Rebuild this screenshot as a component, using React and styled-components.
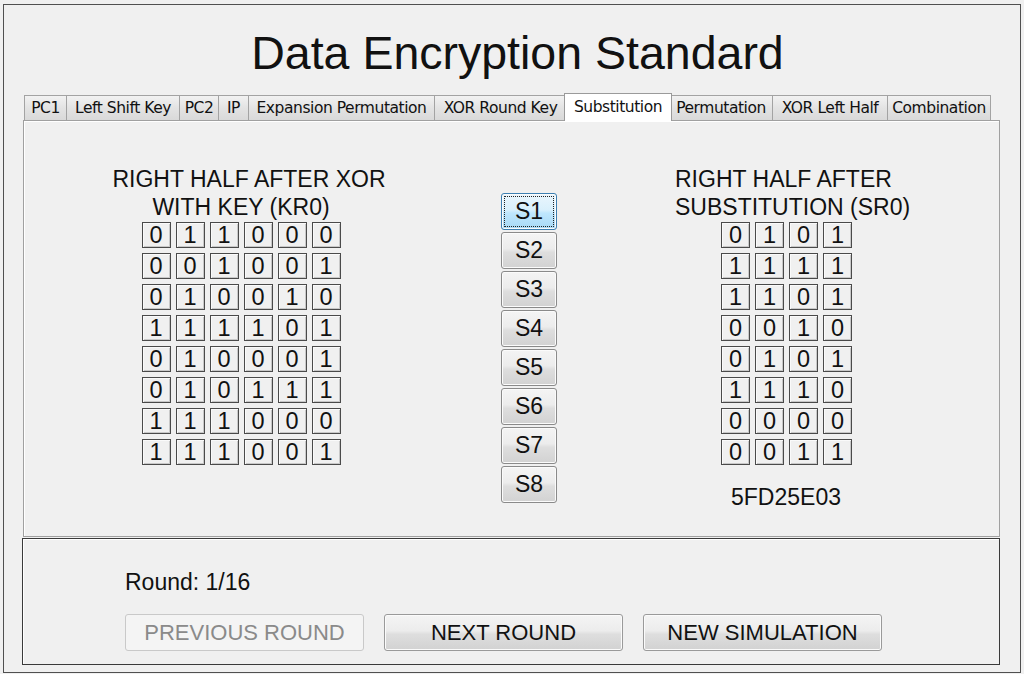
import React from "react";
import styled, { createGlobalStyle, css } from "styled-components";

const Global = createGlobalStyle`
  html, body { margin: 0; padding: 0; background: #f0f0f0; }
  body { font-family: "Liberation Sans", Arial, sans-serif; color: #111; }
`;

const Frame = styled.div`
  margin: 4px 3px 0 3px;
  height: 669px;
  box-sizing: border-box;
  border: 1px solid #505050;
  background: #f0f0f0;
  display: flex;
  flex-direction: column;
`;

const Title = styled.h1`
  margin: 0;
  padding: 25px 0 0 11px;
  height: 63px;
  font-family: "Liberation Sans", Arial, sans-serif;
  font-weight: normal;
  font-size: 46.5px;
  line-height: 46px;
  text-align: center;
  color: #111;
`;

const TabArea = styled.div`
  margin: 0 20px 0 19px;
  display: flex;
  flex-direction: column;
`;

const TabStrip = styled.div`
  display: flex;
  align-items: flex-end;
  height: 27px;
  padding-left: 2px;
  position: relative;
  z-index: 1;
`;

const Tab = styled.div`
  box-sizing: border-box;
  width: ${(p) => p.$w}px;
  height: 25px;
  border: 1px solid #a3a3a3;
  border-bottom: none;
  margin-left: -1px;
  background: linear-gradient(#f2f2f2, #e3e3e3 50%, #d9d9d9);
  font-family: "DejaVu Sans", Tahoma, sans-serif;
  font-size: 15.5px;
  line-height: 25px;
  text-align: center;
  white-space: nowrap;
  overflow: hidden;
  color: #111;
  letter-spacing: -0.45px;
  ${(p) =>
    p.$active &&
    css`
      height: 28px;
      background: #ffffff;
      margin-left: -3px;
      margin-right: -2px;
      width: ${p.$w + 4}px;
      line-height: 26px;
      position: relative;
      top: 1px;
      border-color: #9a9a9a;
    `}
`;

const TabPanel = styled.div`
  box-sizing: border-box;
  height: 417px;
  border: 1px solid #a0a0a0;
  box-shadow: inset 1px 1px 0 #ffffff;
  background: #f0f0f0;
  display: flex;
  align-items: flex-start;
`;

const LeftCol = styled.div`
  margin-left: 76px;
  margin-top: 44px;
  width: 282px;
  display: flex;
  flex-direction: column;
  align-items: center;
`;

const Heading = styled.div`
  font-size: 23px;
  line-height: 28px;
  white-space: nowrap;
  color: #111;
  text-align: ${(p) => p.$align || "center"};
  padding-left: ${(p) => p.$shift || 0}px;
`;

const Grid = styled.div`
  display: grid;
  grid-template-columns: repeat(${(p) => p.$cols}, 29px);
  grid-auto-rows: 26px;
  column-gap: 5px;
  row-gap: 5px;
  margin-top: 1px;
  margin-left: ${(p) => p.$ml || 0}px;
`;

const Cell = styled.div`
  box-sizing: border-box;
  border: 1px solid #4a4a4a;
  box-shadow: inset 1px 1px 0 #fafafa, inset -1px -1px 0 #c8c8c8;
  background: #f0f0f0;
  font-size: 23.5px;
  line-height: 24px;
  text-align: center;
  color: #111;
`;

const CenterCol = styled.div`
  margin-left: 119px;
  margin-top: 72px;
  display: flex;
  flex-direction: column;
  gap: 2px;
`;

const buttonBase = css`
  box-sizing: border-box;
  border: 1px solid #8a8a8a;
  border-radius: 3px;
  background: linear-gradient(#f4f4f4 0%, #ececec 45%, #dedede 55%, #d2d2d2 100%);
  box-shadow: inset 0 0 0 1px #fbfbfb;
  font-family: "Liberation Sans", Arial, sans-serif;
  color: #111;
  padding: 0;
  cursor: default;
`;

const SButton = styled.button`
  ${buttonBase}
  width: 56px;
  height: 37px;
  font-size: 23px;
  position: relative;
  ${(p) =>
    p.$focused &&
    css`
      border-color: #3c7fb1;
      background: linear-gradient(#eaf6fd 0%, #d9f0fc 45%, #bee6fd 55%, #a7d9f5 100%);
      &::after {
        content: "";
        position: absolute;
        inset: 2px;
        border: 1px dotted #222;
        border-radius: 1px;
      }
    `}
`;

const RightCol = styled.div`
  margin-left: 118px;
  margin-top: 44px;
  display: flex;
  flex-direction: column;
  align-items: flex-start;
`;

const Hex = styled.div`
  font-size: 23px;
  line-height: 28px;
  margin-top: 18px;
  width: 130px;
  margin-left: 46px;
  text-align: center;
  color: #111;
`;

const BottomPanel = styled.div`
  box-sizing: border-box;
  margin: 1px 20px 0 18px;
  height: 127px;
  border: 1px solid #3a3a3a;
  box-shadow: inset 1px 1px 0 #ffffff;
  padding: 29px 0 0 102px;
  display: flex;
  flex-direction: column;
`;

const RoundLabel = styled.div`
  font-size: 23px;
  line-height: 28px;
  color: #111;
`;

const ButtonRow = styled.div`
  display: flex;
  gap: 20px;
  margin-top: 18px;
`;

const BigButton = styled.button`
  ${buttonBase}
  width: 239px;
  height: 37px;
  font-size: 22px;
  border-color: #9a9a9a;
  &:disabled {
    background: #f4f4f4;
    border-color: #c9c9c9;
    box-shadow: none;
    color: #8a8a8a;
  }
`;

const tabs = [
  ["PC1", 43],
  ["Left Shift Key", 114],
  ["PC2", 40],
  ["IP", 31],
  ["Expansion Permutation", 187],
  ["XOR Round Key", 133],
  ["Substitution", 104],
  ["Permutation", 104],
  ["XOR Left Half", 116],
  ["Combination", 104],
];

const kr0 = [
  "011000",
  "001001",
  "010010",
  "111101",
  "010001",
  "010111",
  "111000",
  "111001",
];

const sr0 = ["0101", "1111", "1101", "0010", "0101", "1110", "0000", "0011"];

export default function App() {
  return (
    <>
      <Global />
      <Frame>
        <Title>Data Encryption Standard</Title>
        <TabArea>
          <TabStrip>
            {tabs.map(([t, w]) => (
              <Tab key={t} $w={w} $active={t === "Substitution"}>
                {t}
              </Tab>
            ))}
          </TabStrip>
          <TabPanel>
            <LeftCol>
              <Heading $shift={16}>RIGHT HALF AFTER XOR</Heading>
              <Heading>WITH KEY (KR0)</Heading>
              <Grid $cols={6}>
                {kr0.flatMap((row, r) =>
                  row.split("").map((b, c) => <Cell key={`${r}-${c}`}>{b}</Cell>)
                )}
              </Grid>
            </LeftCol>
            <CenterCol>
              {[1, 2, 3, 4, 5, 6, 7, 8].map((n) => (
                <SButton key={n} $focused={n === 1}>
                  S{n}
                </SButton>
              ))}
            </CenterCol>
            <RightCol>
              <Heading $align="left">RIGHT HALF AFTER</Heading>
              <Heading $align="left">SUBSTITUTION (SR0)</Heading>
              <Grid $cols={4} $ml={46}>
                {sr0.flatMap((row, r) =>
                  row.split("").map((b, c) => <Cell key={`${r}-${c}`}>{b}</Cell>)
                )}
              </Grid>
              <Hex>5FD25E03</Hex>
            </RightCol>
          </TabPanel>
        </TabArea>
        <BottomPanel>
          <RoundLabel>Round: 1/16</RoundLabel>
          <ButtonRow>
            <BigButton disabled>PREVIOUS ROUND</BigButton>
            <BigButton>NEXT ROUND</BigButton>
            <BigButton>NEW SIMULATION</BigButton>
          </ButtonRow>
        </BottomPanel>
      </Frame>
    </>
  );
}
